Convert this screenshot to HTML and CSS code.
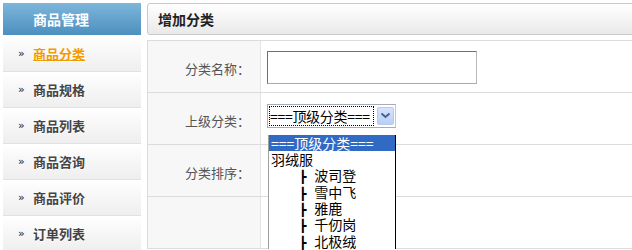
FILE: index.html
```html
<!DOCTYPE html>
<html>
<head>
<meta charset="utf-8">
<link rel="stylesheet" href="styles.css">
</head>
<body>
<div class="page">
  <aside class="sidebar">
    <div class="side-head">商品管理</div>
    <ul class="side-list">
      <li class="side-item active"><span class="chev">»</span><a>商品分类</a></li>
      <li class="side-item"><span class="chev">»</span><a>商品规格</a></li>
      <li class="side-item"><span class="chev">»</span><a>商品列表</a></li>
      <li class="side-item"><span class="chev">»</span><a>商品咨询</a></li>
      <li class="side-item"><span class="chev">»</span><a>商品评价</a></li>
      <li class="side-item"><span class="chev">»</span><a>订单列表</a></li>
    </ul>
  </aside>
  <main class="main">
    <div class="panel-head">增加分类</div>
    <div class="form">
      <div class="row">
        <div class="label">分类名称：</div>
        <div class="field"><div class="text-input"></div></div>
      </div>
      <div class="row">
        <div class="label">上级分类：</div>
        <div class="field">
          <div class="select">
            <span class="select-text">===顶级分类===</span>
            <span class="select-btn"><svg width="11" height="7" viewBox="0 0 11 7"><path d="M1.5 1.5 L5.5 5 L9.5 1.5" fill="none" stroke="#4d6185" stroke-width="2"/></svg></span>
            <ul class="dropdown">
              <li class="opt sel">===顶级分类===</li>
              <li class="opt">羽绒服</li>
              <li class="opt sub"><span class="tee">┣</span>波司登</li>
              <li class="opt sub"><span class="tee">┣</span>雪中飞</li>
              <li class="opt sub"><span class="tee">┣</span>雅鹿</li>
              <li class="opt sub"><span class="tee">┣</span>千仞岗</li>
              <li class="opt sub"><span class="tee">┣</span>北极绒</li>
            </ul>
          </div>
        </div>
      </div>
      <div class="row">
        <div class="label">分类排序：</div>
        <div class="field"></div>
      </div>
      <div class="row">
        <div class="label"></div>
        <div class="field"></div>
      </div>
    </div>
  </main>
</div>
</body>
</html>
```

FILE: styles.css
```css
html, body {
  margin: 0;
  padding: 0;
  background: #fff;
  overflow: hidden;
  font-family: "Noto Sans CJK SC", "Noto Sans", sans-serif;
}
.page {
  display: flex;
  gap: 6px;
  padding: 3px 0 0 3px;
  width: 760px;
}
.sidebar {
  width: 138px;
  flex: none;
}
.side-head {
  height: 32px;
  line-height: 32px;
  padding-left: 30px;
  color: #fff;
  font-size: 14px;
  font-weight: bold;
  background: linear-gradient(#7db6da, #4d8fbf);
}
.side-list {
  list-style: none;
  margin: 0;
  padding: 0;
}
.side-item {
  height: 35px;
  border-bottom: 1px solid #e2e2e2;
  background: linear-gradient(#ffffff, #eeeeee);
  display: flex;
  align-items: center;
  font-size: 13px;
  font-weight: bold;
  color: #444;
}
.side-item:first-child {
  margin-top: 1px;
}
.chev {
  width: 12px;
  margin-left: 15px;
  margin-right: 3px;
  font-size: 11px;
  color: #222;
  font-family: "DejaVu Sans", sans-serif;
  font-weight: normal;
}
.side-item a {
  text-shadow: 0 1px 0 #fff;
}
.side-item.active a {
  color: #f29a00;
  text-decoration: underline;
}
.main {
  flex: none;
  width: 600px;
}
.panel-head {
  height: 30px;
  line-height: 30px;
  border: 1px solid #c9c9c9;
  border-radius: 3px;
  background: linear-gradient(#ffffff, #e9e9e9);
  padding-left: 10px;
  font-size: 14px;
  font-weight: bold;
  color: #222;
}
.form {
  margin-top: 5px;
  border-top: 1px solid #dcdcdc;
  border-left: 1px solid #dcdcdc;
}
.row {
  display: flex;
  height: 51px;
  border-bottom: 1px solid #dcdcdc;
}
.label {
  width: 113px;
  flex: none;
  background: #f7f7f7;
  border-right: 1px solid #e4e4e4;
  padding-right: 10px;
  box-sizing: border-box;
  font-size: 13px;
  color: #555;
  display: flex;
  align-items: center;
  justify-content: flex-end;
  padding-top: 4px;
}
.field {
  flex: 1;
  display: flex;
  align-items: center;
  padding-left: 6px;
  position: relative;
}
.text-input {
  width: 208px;
  height: 31px;
  border: 1px solid #aaa;
  border-top-color: #707070;
  border-left-color: #707070;
  border-right-color: #b8b8b8;
  background: #fff;
  margin-top: 1px;
}
.select {
  position: relative;
  width: 125px;
  height: 22px;
  border: 1px solid #a5acb5;
  border-right-color: #c8c8c8;
  background: #fff;
  margin-top: -6px;
  display: flex;
  align-items: center;
  padding: 0 1px 0 1px;
  gap: 3px;
}
.select-text {
  flex: 1;
  height: 18px;
  line-height: 18px;
  border: 1px dotted #000;
  font-size: 14px;
  letter-spacing: -0.3px;
  color: #000;
  white-space: nowrap;
}
.select-btn {
  flex: none;
  width: 17px;
  height: 18px;
  background: linear-gradient(#d6e4fd, #b8cff9);
  border: 1px solid #b6c9ef;
  box-sizing: border-box;
  border-radius: 2px;
  display: flex;
  align-items: center;
  justify-content: center;
}
.dropdown {
  position: absolute;
  left: 0;
  top: 30px;
  width: 126px;
  margin: 0;
  padding: 0;
  list-style: none;
  background: #fff;
  border-left: 1px solid #a0a0a0;
  border-right: 1px solid #000;
  z-index: 2;
}
.opt {
  height: 16.4px;
  line-height: 16.4px;
  font-size: 14px;
  color: #000;
  padding-left: 2px;
  white-space: nowrap;
}
.opt.sel {
  background: #316ac5;
  color: #fff;
}
.opt.sub {
  padding-left: 30px;
}
.tee {
  font-family: "DejaVu Sans Mono", monospace;
  font-size: 12px;
  margin-right: 8px;
}
```
